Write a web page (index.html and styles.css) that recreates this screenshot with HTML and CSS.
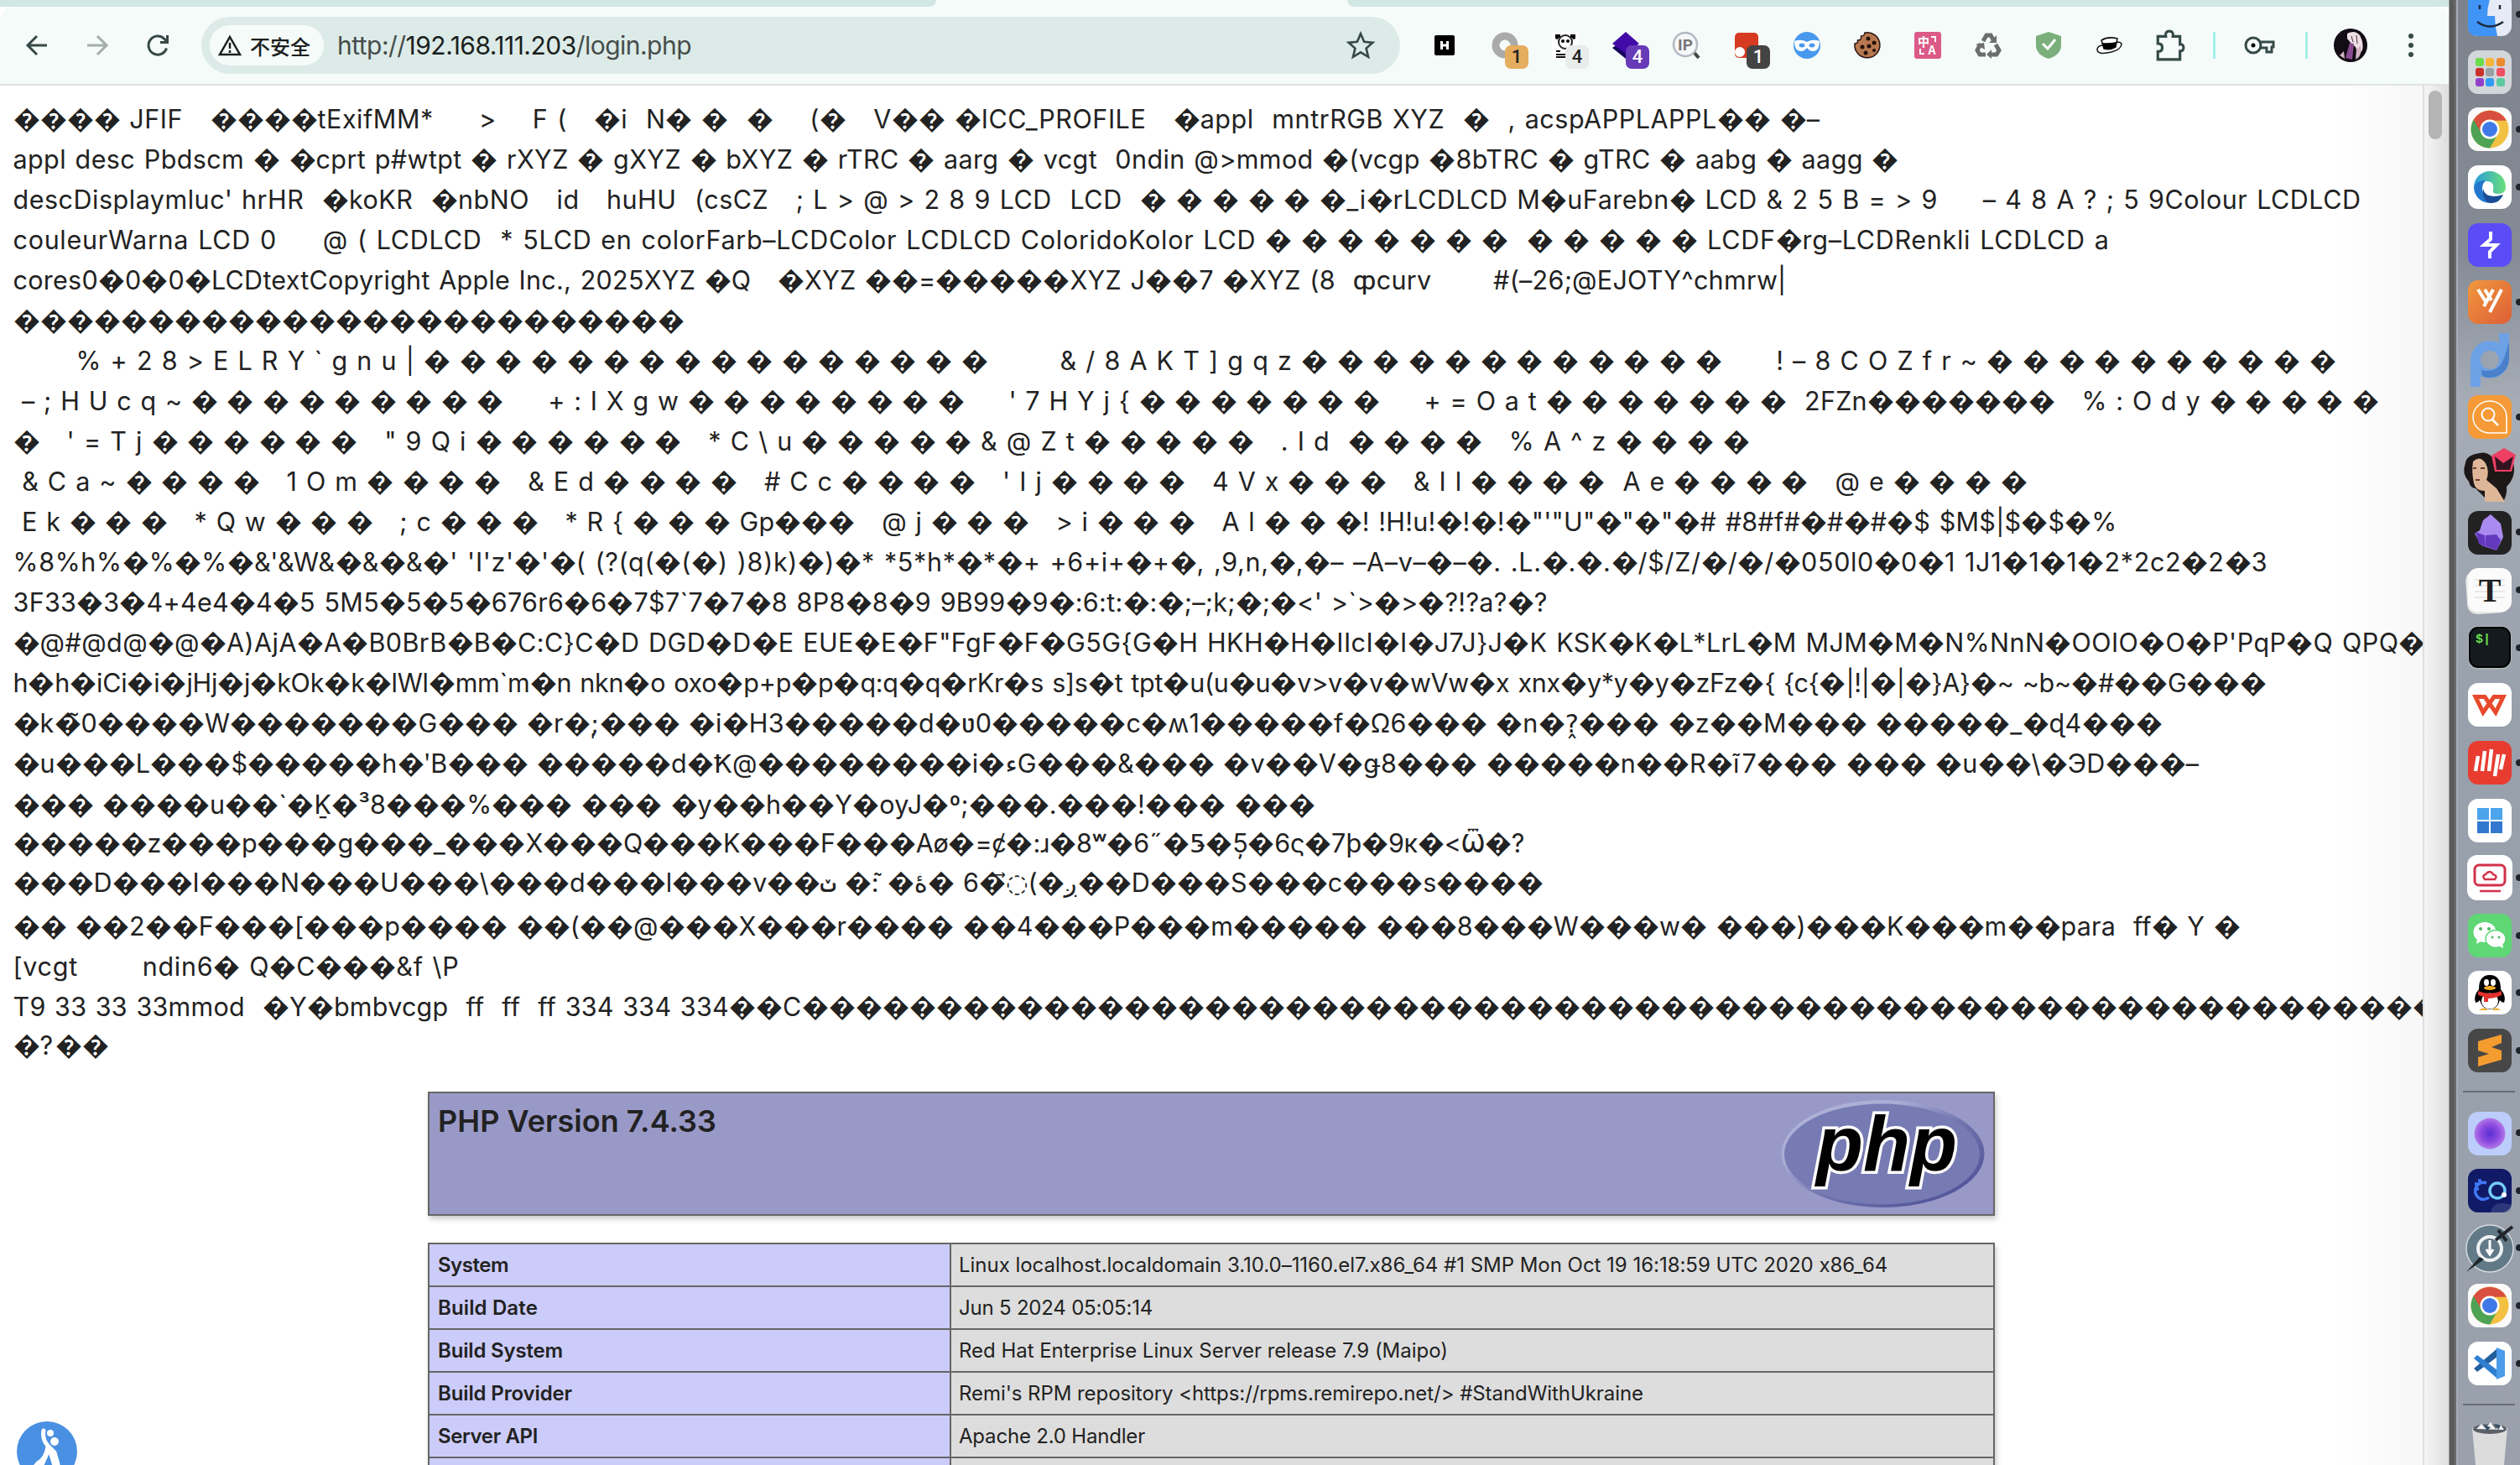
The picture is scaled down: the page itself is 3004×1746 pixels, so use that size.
FILE: index.html
```html
<!DOCTYPE html>
<html lang="zh-CN">
<head>
<meta charset="utf-8">
<title>phpinfo()</title>
<link rel="stylesheet" href="styles.css">
</head>
<body>
<main class="window">
  <div class="tabstrip"><span class="tab-left"></span><span class="tab-active"></span><span class="tab-right"></span></div>
  <header class="toolbar">
    <nav class="nav">
      <svg viewBox="0 0 32 32"><path d="M28 16H6M16 5L5 16l11 11" class="ln"/></svg>
      <svg viewBox="0 0 32 32" class="dim"><path d="M4 16h22M16 5l11 11-11 11" class="ln"/></svg>
      <svg viewBox="0 0 32 32"><path d="M26.500 19.500A11 11 0 1 1 24 8.500L27 11.500M27.500 4v8.500H19" class="ln"/></svg>
    </nav>
    <div class="omnibox">
      <span class="chip">
        <svg viewBox="0 0 28 26"><path d="M14 3L26 24H2Z" class="ln thin"/><path d="M14 10v7M14 19v3" class="ln thin"/></svg>
        <span>不安全</span>
      </span>
      <span class="url fit" data-w="422">http://<b>192.168.111.203</b>/login.php</span>
      <svg class="star" viewBox="0 0 32 32"><path d="M16 3l3.900 9.100 9.600.9-7.300 6.400 2.300 9.600L16 23.900 7.500 29l2.300-9.600L2.500 13l9.600-.9z" class="ln thin"/></svg>
    </div>
    <div class="exts">
      <span class="ext"><svg viewBox="0 0 32 32"><rect x="4" y="4" width="24" height="24" rx="2"/><path d="M12.500 11v10M19.500 11v10M12.500 16h7" stroke="#fff" stroke-width="3"/></svg></span>
      <span class="ext"><svg viewBox="0 0 32 32"><circle cx="16" cy="16" r="11" fill="none" stroke="#aaa" stroke-width="9"/></svg><i class="badge amber">1</i></span>
      <span class="ext"><svg viewBox="0 0 32 32"><rect width="32" height="32" fill="#fff"/><path d="M4 8V3h6v3L6 9zM28 8V3h-6v3l4 3z"/><circle cx="16" cy="12" r="8" fill="#fff" stroke="#222" stroke-width="2"/><circle cx="13" cy="11" r="2"/><circle cx="19" cy="11" r="2"/><path d="M5 27h20M5 23h5M5 30h14" stroke="#111" stroke-width="2"/></svg><i class="badge pale">4</i></span>
      <span class="ext"><svg viewBox="0 0 32 32"><path d="M16 8l16 11-16 13L0 19z" fill="#160060"/><path d="M16 0l16 14-16 12L0 14z" fill="#420ba8"/></svg><i class="badge violet">4</i></span>
      <span class="ext"><svg viewBox="0 0 32 32"><path d="M25 24l6 7" stroke="#444" stroke-width="4"/><circle cx="15" cy="15" r="14" fill="#f6f8fa" stroke="#b4bac2" stroke-width="2.500"/><text x="15" y="22" text-anchor="middle" class="ip">IP</text></svg></span>
      <span class="ext"><svg viewBox="0 0 32 32"><rect x="2" y="1" width="28" height="30" rx="5" fill="#d63a20"/><circle cx="8" cy="24" r="6" fill="#fff"/></svg><i class="badge dark">1</i></span>
      <span class="ext"><svg viewBox="0 0 32 32"><circle cx="16" cy="16" r="16" fill="#4898ee"/><path d="M1 11q8-3 15 1 7-4 15-1 0 12-8 12-4 0-7-4-3 4-7 4-8 0-8-12z" fill="#fff"/><ellipse cx="10" cy="16" rx="3.500" ry="2.500" fill="#4898ee"/><ellipse cx="22" cy="16" rx="3.500" ry="2.500" fill="#4898ee"/></svg></span>
      <span class="ext"><svg viewBox="0 0 32 32"><path d="M13 1a15 15 0 1 1-12 13q4 0 3.500-4 5 0 4-5 4 0 4.500-4z" fill="#b87850" stroke="#2a1410" stroke-width="1.500"/><g fill="#24100c"><circle cx="17" cy="8" r="2.500"/><circle cx="24" cy="13" r="2.500"/><circle cx="10" cy="18" r="2.500"/><circle cx="18" cy="17" r="2.500"/><circle cx="24" cy="22" r="2"/><circle cx="14" cy="25" r="2.500"/></g></svg></span>
      <span class="ext"><svg viewBox="0 0 32 32"><rect width="32" height="32" rx="3" fill="#db5a87"/><text x="11" y="17" text-anchor="middle" class="tr">中</text><text x="21" y="27" text-anchor="middle" class="tr">A</text><path d="M7 20v6h5M20 6h5v6" fill="none" stroke="#fff" stroke-width="2"/></svg></span>
      <span class="ext"><svg viewBox="0 0 32 32"><g fill="none" stroke="#6d6d6d" stroke-width="5"><path d="M10 11l4-7h5l4 7M25 15l4 7-3 5h-7M13 27H6l-3-5 4-8"/></g><path d="M26 4v9h-9zM20 21v11l-6-5zM1 15l10-2 1 8z" fill="#6d6d6d"/></svg></span>
      <span class="ext"><svg viewBox="0 0 32 32"><path d="M16 0l15 5v11q0 11-15 16Q1 27 1 16V5z" fill="#7aaf7c"/><path d="M9 14l6 6 9-11" fill="none" stroke="#fff" stroke-width="3"/></svg></span>
      <span class="ext"><svg viewBox="0 0 32 32"><path d="M2 21q0-4 6-5l17-4q6 0 6 3-1 6-12 9-17 4-17-3z" fill="#fff" stroke="#111" stroke-width="1.500"/><path d="M7 10q8-5 19-2l-2 10q-7 4-14 2z" fill="#fff" stroke="#111" stroke-width="1.500"/><path d="M7.500 13q9 1 17.500-1l-1 6q-7 4-14 2z"/></svg></span>
      <span class="ext"><svg viewBox="0 0 36 36"><path d="M5 8h9q-1-6 4-6t4 6h8v9q4-.5 4 3.500t-4 4V34H5v-9q5 0 5-4.500T5 16z" class="ln"/></svg></span>
    </div>
    <i class="rule"></i>
    <svg class="key" viewBox="0 0 38 32"><circle cx="11" cy="16" r="9" class="ln"/><circle cx="11" cy="16" r="2.500"/><path d="M19 12h16v6h-2v6h-6v-5h-8" class="ln"/></svg>
    <i class="rule"></i>
    <svg class="avatar" viewBox="0 0 40 40"><circle cx="20" cy="20" r="20" fill="#120c14"/><path d="M16 6q9-5 15 2 5 9 3 18l-5 6-3-10-5-4-5-6z" fill="#eddfe3"/><path d="M19 17l5 1-2 19-8-2z" fill="#8a4b92"/><path d="M27 24l5-3q2 7-2 13l-4 3zM12 27l-5 5 6 4z" fill="#d2b4c2"/><path d="M21 9l2 7M27 8l1 10" stroke="#4a3040"/></svg>
    <svg class="more" viewBox="0 0 8 32"><circle cx="4" cy="5" r="3"/><circle cx="4" cy="16" r="3"/><circle cx="4" cy="27" r="3"/></svg>
  </header>

  <div class="page">
    <div class="viewport">
      <section class="dump">
<div class="line fit" data-w="2154">���� JFIF   ����tExifMM*     &gt;    F (   �i  N� �  �    (�   V�� �ICC_PROFILE   �appl  mntrRGB XYZ  �  , acspAPPLAPPL�� �–</div>
<div class="line fit" data-w="2248">appl desc Pbdscm � �cprt p#wtpt � rXYZ � gXYZ � bXYZ � rTRC � aarg � vcgt  0ndin @&gt;mmod �(vcgp �8bTRC � gTRC � aabg � aagg �</div>
<div class="line fit" data-w="2799">descDisplaymluc' hrHR  �koKR  �nbNO   id   huHU  (csCZ   ; L &gt; @ &gt; 2 8 9 LCD  LCD  � � � � � �_i�rLCDLCD M�uFarebn� LCD &amp; 2 5 B = &gt; 9     – 4 8 A ? ; 5 9Colour LCDLCD</div>
<div class="line fit" data-w="2499">couleurWarna LCD 0     @ ( LCDLCD  * 5LCD en colorFarb–LCDColor LCDLCD ColoridoKolor LCD � � � � � � �  � � � � � LCDF�rg–LCDRenkli LCDLCD a</div>
<div class="line fit" data-w="2114">cores0�0�0�LCDtextCopyright Apple Inc., 2025XYZ �Q   �XYZ ��=�����XYZ J��7 �XYZ (8  ȹcurv       #(–26;@EJOTY^chmrw|</div>
<div class="line fit">�������������������������</div>
<div class="line fit" data-w="2769">       % + 2 8 &gt; E L R Y ` g n u | � � � � � � � � � � � � � � � �        &amp; / 8 A K T ] g q z � � � � � � � � � � � �      ! – 8 C O Z f r ~ � � � � � � � � � �</div>
<div class="line fit" data-w="2820"> – ; H U c q ~ � � � � � � � � �     + : I X g w � � � � � � � �     ' 7 H Y j { � � � � � � �     + = O a t � � � � � � �  2FZn�������   % : O d y � � � � �</div>
<div class="line fit" data-w="2070">�   ' = T j � � � � � �   " 9 Q i � � � � � �   * C \ u � � � � � &amp; @ Z t � � � � �   . I d  � � � �   % A ^ z � � � �</div>
<div class="line fit" data-w="2401"> &amp; C a ~ � � � �   1 O m � � � �   &amp; E d � � � �   # C c � � � �   ' I j � � � �   4 V x � � �   &amp; I l � � � �  A e � � � �   @ e � � � �</div>
<div class="line fit" data-w="2508"> E k � � �   * Q w � � �   ; c � � �   * R { � � � Gp���   @ j � � �   &gt; i � � �   A l � � �! !H!u!�!�!�"'"U"�"�"�# #8#f#�#�#�$ $M$|$�$�%</div>
<div class="line fit" data-w="2692">%8%h%�%�%�&amp;'&amp;W&amp;�&amp;�&amp;�' 'I'z'�'�( (?(q(�(�) )8)k)�)�* *5*h*�*�+ +6+i+�+�, ,9,n,�,�– –A–v–�–�. .L.�.�.�/$/Z/�/�/�050l0�0�1 1J1�1�1�2*2c2�2�3</div>
<div class="line fit" data-w="1829">3F33�3�4+4e4�4�5 5M5�5�5�676r6�6�7$7`7�7�8 8P8�8�9 9B99�9�:6:t:�:�;–;k;�;�&lt;' &gt;`&gt;�&gt;�?!?a?�?</div>
<div class="line fit" data-w="2876">�@#@d@�@�A)AjA�A�B0BrB�B�C:C}C�D DGD�D�E EUE�E�F"FgF�F�G5G{G�H HKH�H�IIcI�I�J7J}J�K KSK�K�L*LrL�M MJM�M�N%NnN�OOIO�O�P'PqP�Q QPQ�</div>
<div class="line fit" data-w="2687">h�h�iCi�i�jHj�j�kOk�k�lWl�mm`m�n nkn�o oxo�p+p�p�q:q�q�rKr�s s]s�t tpt�u(u�u�v&gt;v�v�wVw�x xnx�y*y�y�zFz�{ {c{�|!|�|�}A}�~ ~b~�#��G���</div>
<div class="line fit" data-w="2563">�k�̃0����W�������G��� �r�;̩��� �i�H3�����d�ʋ0�����c�ʍ1�����f�Ω6��� �n�?̭��� �z��M��� �����_�ɖ4���</div>
<div class="line fit" data-w="2606">�u���L���$�����h�ʹB��� �����d�Ҟ@��������i�ءG���&amp;��� �v��V�ǥ8��� �����n��R�ĩ7��� ��� �u��\�ЭD���–</div>
<div class="line fit d1" data-w="1552">��� ����u��`�Ḵ�³8���%��� ��� �y��h��Y�oyJ�º;���.���!��� ���</div>
<div class="line fit u2" data-w="1801">�����z���p���g���_���X���Q���K���F���Aø�=ȼ�:ɹ�8ʷ�6˶�5̵�5̦�6ς�7ϸ�9к�&lt;Ѿ�?</div>
<div class="line fit u1" data-w="1844">���D���I���N���U���\���d���l���v��ݖ �:̃ �ۀ� 6�◌⃗(�ږ��D���S���c���s����</div>
<div class="line fit d4" data-w="2655">�� ��2��F���[���p���� ��(��@���X���r���� ��4���P���m����� ���8���W���w� ���)���K���m��para  ff� Y �</div>
<div class="line fit" data-w="532">[vcgt       ndin6� Q�C���&amp;f \P</div>
<div class="line fit" data-w="2892">T9 33 33 33mmod  �Y�bmbvcgp  ff  ff  ff 334 334 334��C�������������������������������������������������������������</div>
<div class="line fit u2" data-w="114">�?��</div>
      </section>

      <section class="info">
        <div class="banner">
          <h1><span class="fit" data-w="332">PHP Version 7.4.33</span></h1>
          <svg viewBox="0 0 241 128">
            <defs><linearGradient id="rim" x1="0" y1="0" x2="1" y2="1"><stop offset="0" stop-color="#b4b7da"/><stop offset=".3" stop-color="#a9acd4"/><stop offset=".55" stop-color="#6f73ad"/><stop offset="1" stop-color="#484893"/></linearGradient></defs>
            <ellipse cx="119.500" cy="64" rx="121" ry="64" fill="url(#rim)"/>
            <ellipse cx="118.500" cy="64.500" rx="116.500" ry="60" fill="#777bb3"/>
            <text x="40" y="84" textLength="168" lengthAdjust="spacingAndGlyphs" class="php">php</text>
          </svg>
        </div>
        <table>
          <tr><th><span class="fit" data-w="84">System</span></th><td><span class="fit" data-w="1110">Linux localhost.localdomain 3.10.0–1160.el7.x86_64 #1 SMP Mon Oct 19 16:18:59 UTC 2020 x86_64</span></td></tr>
          <tr><th><span class="fit" data-w="119">Build Date</span></th><td><span class="fit" data-w="231">Jun 5 2024 05:05:14</span></td></tr>
          <tr><th><span class="fit" data-w="149">Build System</span></th><td><span class="fit" data-w="583">Red Hat Enterprise Linux Server release 7.9 (Maipo)</span></td></tr>
          <tr><th><span class="fit" data-w="160">Build Provider</span></th><td><span class="fit" data-w="816">Remi's RPM repository &lt;https://rpms.remirepo.net/&gt; #StandWithUkraine</span></td></tr>
          <tr><th><span class="fit" data-w="119">Server API</span></th><td><span class="fit" data-w="222">Apache 2.0 Handler</span></td></tr>
          <tr><th></th><td></td></tr>
        </table>
      </section>
      <svg class="float-btn" viewBox="0 0 72 72"><circle cx="36" cy="36" r="36" fill="#4a90e2"/><circle cx="40" cy="14" r="4" fill="#fff"/><circle cx="45" cy="24" r="5" fill="#fff"/><path d="M32 11q-2 10 5 18l8 8 4 14M37 30q-2 14-12 20l-5 6M38 34l-10 22M40 36l6 20" fill="none" stroke="#fff" stroke-width="5" stroke-linecap="round"/></svg>
    </div>
    <aside class="gutter"><i class="thumb"></i></aside>
  </div>
</main>
<div class="edge"></div>

<aside class="dock">
  <span class="app"><svg viewBox="0 0 52 52"><rect width="52" height="52" rx="12" fill="#e6ebf5"/><path d="M12 0h17q-6 14-6 28h9q0 12 3 24H12Q0 52 0 40V12Q0 0 12 0z" fill="#3f94f5"/><path d="M14 15v5M38 15v5M11 35q15 11 31 0" fill="none" stroke="#1c2a3c" stroke-width="2.500"/></svg></span>
  <span class="app nodot"><svg viewBox="0 0 52 52"><rect width="52" height="52" rx="12" fill="#d3d6da"/><g><rect x="9" y="9" width="10" height="10" rx="3" fill="#6bdc4c"/><rect x="21" y="9" width="10" height="10" rx="3" fill="#f5b63a"/><rect x="34" y="9" width="10" height="10" rx="3" fill="#ec8a2e"/><rect x="9" y="21" width="10" height="10" rx="3" fill="#c9302a"/><rect x="21" y="21" width="10" height="10" rx="3" fill="#98a0a6"/><rect x="34" y="21" width="10" height="10" rx="3" fill="#f04e62"/><rect x="9" y="33" width="10" height="10" rx="3" fill="#9140c8"/><rect x="21" y="33" width="10" height="10" rx="3" fill="#2f9cf5"/><rect x="34" y="33" width="10" height="10" rx="3" fill="#5ccaa0"/></g></svg></span>
  <span class="app"><svg viewBox="0 0 52 52"><g id="chrome"><rect width="52" height="52" rx="12" fill="#fafafa"/><circle cx="26" cy="26" r="22.500" fill="#f3c142"/><path d="M26 26L6.500 14.800A22.500 22.500 0 0 0 26 48.500L36 31z" fill="#4ea355"/><path d="M26 26L6.500 14.800a22.500 22.500 0 0 1 39.400 1H26z" fill="#d94f3f"/><path d="M26 26L16.500 31 6.500 14.800z" fill="#d94f3f"/><circle cx="26" cy="26" r="11.500" fill="#fff"/><circle cx="26" cy="26" r="9" fill="#3f79e8"/></g></svg></span>
  <span class="app"><svg viewBox="0 0 52 52"><defs><linearGradient id="eg" x1="0" x2="1"><stop offset="0" stop-color="#2a9bdc"/><stop offset="1" stop-color="#6be07a"/></linearGradient></defs><rect width="52" height="52" rx="12" fill="#fff"/><path d="M7 26a19 19 0 0 1 38 0q0 8-9 8-8 0-6-5 2-10-8-10Q11 19 7 26z" fill="url(#eg)"/><path d="M7 26q3-8 14-8-6 7-3 14 4 9 21 7-5 6-13 6A19 19 0 0 1 7 26z" fill="#2277cc"/><path d="M18 28q3 13 24 7-4 10-15 10-10-2-9-17z" fill="#1a4d96"/></svg></span>
  <span class="app nodot"><svg viewBox="0 0 52 52"><rect width="52" height="52" rx="12" fill="#5a4df8"/><path d="M27 10v9l-8 7h15l-8 8v8" fill="none" stroke="#fff" stroke-width="4"/></svg></span>
  <span class="app"><svg viewBox="0 0 52 52"><defs><linearGradient id="or" x1="0" y1="0" x2="1" y2="1"><stop offset="0" stop-color="#f0983e"/><stop offset="1" stop-color="#de5e36"/></linearGradient></defs><rect width="52" height="52" rx="12" fill="url(#or)"/><path d="M12 11l10 16M20 11l8 13M30 11L19 31M40 11L26 38" stroke="#fff" stroke-width="4"/></svg></span>
  <span class="app nodot"><svg class="tall" viewBox="0 0 52 64"><path d="M3 64V32A23 23 0 0 1 37 12V0h12v32A23 23 0 0 1 15 51v13z" fill="#6da1e5"/><path d="M17 51a23 23 0 0 0 32-19V10q-6 24-12 30-8 7-21 4z" fill="#4a7fca"/><circle cx="26" cy="32" r="11" fill="#9aa3b0"/></svg></span>
  <span class="app"><svg viewBox="0 0 52 52"><rect width="52" height="52" rx="12" fill="#f59a36"/><path d="M46 26v19H26a20 19 0 1 1 20-19z" fill="none" stroke="#fff" stroke-width="1.500"/><circle cx="24" cy="23" r="7.500" fill="none" stroke="#fff" stroke-width="2"/><path d="M29 29l7 7" stroke="#fff" stroke-width="2.500"/></svg></span>
  <span class="app nodot"><svg class="wide" viewBox="0 0 64 64"><path d="M20 6Q4 8 3 18q-5 12 4 22 2 8 8 8l14 14h20q4-8 3-16 12-12 8-28-8-10-26-8-6-6-14-4z" fill="#1d1718"/><path d="M12 16q8-8 15 2 5 10 1 20l12 10 10 16H26l0-13q-11 0-13-9-3-14-1-26z" fill="#ddb797"/><path d="M12 24h4M21 24h5M15 38h5" stroke="#6b3a30" stroke-width="2"/><path d="M49 0l14 8-5 20H38l-4-19z" fill="#ef3f63"/><path d="M38 10l10 8 12-8-4 16H40z" fill="#33131f"/></svg></span>
  <span class="app"><svg viewBox="0 0 52 52"><rect width="52" height="52" rx="12" fill="#222"/><path d="M27 4l12 11 3 16-8 16-18-6-8-14 6-4 4-12z" fill="#a98af0"/><path d="M9 25l11 4 1 14-8-4zM21 29l13-1 5 7-5 12-13-5z" fill="#6438bd"/></svg></span>
  <span class="app"><svg viewBox="0 0 52 52"><rect x="-2" y="2" width="51" height="52" rx="12" fill="#e8e8e8" transform="rotate(-4 26 26)"/><rect width="52" height="52" rx="12" fill="#fbfbfb"/><path d="M8 14h36M8 21h36M8 28h36M8 35h36" stroke="#e2e2e2" stroke-width="1.500"/><text x="26" y="40" text-anchor="middle" class="typ">T</text></svg></span>
  <span class="app"><svg viewBox="0 0 52 52"><rect width="52" height="52" rx="12" fill="#a8b4b8"/><rect x="2" y="2" width="48" height="47" rx="10" fill="#131b1e" stroke="#000" stroke-width="2"/><text x="9" y="20" class="term">$|</text></svg></span>
  <span class="app nodot"><svg viewBox="0 0 52 52"><rect width="52" height="52" rx="12" fill="#fff"/><path d="M9 16.500h11l13 18.500 9-18.500H31L18 35z" fill="none" stroke="#e84a2c" stroke-width="5"/></svg></span>
  <span class="app"><svg viewBox="0 0 52 52"><rect width="52" height="52" rx="12" fill="#e83c31"/><path d="M12 18L9 36M20 12l-3 24M28 10l-3 26M36 16l-4 26M43 16l-4 18" stroke="#fff" stroke-width="4.500"/></svg></span>
  <span class="app nodot"><svg viewBox="0 0 52 52"><rect width="52" height="52" rx="12" fill="#fff"/><path d="M11 11h14v14H11zM27 11h14v14H27z" fill="#4ca5ec"/><path d="M11 27h14v14H11zM27 27h14v14H27z" fill="#3378d0"/></svg></span>
  <span class="app"><svg viewBox="0 0 52 52"><rect x="-1" y="-1" width="54" height="54" rx="12" fill="#fff"/><rect x="8" y="11" width="36" height="24" rx="5" fill="none" stroke="#d2314a" stroke-width="3"/><path d="M20 28q-4-4 1-6 5-6 9 0 6 2 2 6zM14 42h25" fill="none" stroke="#d2314a" stroke-width="2.500"/></svg></span>
  <span class="app"><svg viewBox="0 0 52 52"><rect width="52" height="52" rx="12" fill="#5fd775"/><ellipse cx="20" cy="22" rx="13.500" ry="12" fill="#fff"/><path d="M11 30l-1 6 7-4z" fill="#fff"/><ellipse cx="33" cy="30" rx="12" ry="10.500" fill="#fff" stroke="#5fd775" stroke-width="1.500"/><path d="M41 35l1 6-6-3z" fill="#fff"/><g fill="#4fb863"><circle cx="15" cy="18" r="2"/><circle cx="25" cy="18" r="2"/><circle cx="29" cy="28" r="1.500"/><circle cx="37" cy="28" r="1.500"/></g></svg></span>
  <span class="app"><svg viewBox="0 0 52 52"><rect width="52" height="52" rx="12" fill="#fff"/><path d="M26 5q13 0 13 17 7 8 4 16-3 0-5-3-3 11-12 11t-12-11q-2 3-5 3-3-8 4-16Q13 5 26 5z"/><ellipse cx="26" cy="36" rx="10" ry="9.500" fill="#fff"/><ellipse cx="22" cy="14" rx="3" ry="4" fill="#fff"/><ellipse cx="30" cy="14" rx="3" ry="4" fill="#fff"/><ellipse cx="26" cy="20.500" rx="7" ry="2.500" fill="#f5ac28"/><path d="M12 24q14 6 28 0v5q-8 4-16 4v4h-5v-6l-7-2z" fill="#e2312d"/><path d="M13 47q6-5 11 0zM28 47q6-5 11 0z" fill="#f5ac28"/></svg></span>
  <span class="app"><svg viewBox="0 0 52 52"><rect width="52" height="52" rx="12" fill="#474747"/><path d="M12 15l28-8v10l-12 5 12 4v11L12 45V34l13-4-13-4z" fill="#f49c30"/></svg></span>
  <i class="sep"></i>
  <span class="app"><svg viewBox="0 0 52 52"><defs><radialGradient id="ball"><stop offset="0" stop-color="#5a2fd0"/><stop offset=".6" stop-color="#8e4be0"/><stop offset="1" stop-color="#b37be8"/></radialGradient></defs><rect width="52" height="52" rx="12" fill="#bccdfc"/><circle cx="26" cy="26" r="18.500" fill="url(#ball)"/></svg></span>
  <span class="app"><svg viewBox="0 0 52 52"><rect width="52" height="52" rx="12" fill="#101a66"/><path d="M27 52q2-11 14-11 7 0 11 3-1 8-10 8z" fill="#4a5590" opacity=".5"/><path d="M22 17a10 10 0 1 0 3 17M8 18h4M9 24h4M12 14h4" fill="none" stroke="#3f78f6" stroke-width="3.500"/><circle cx="35" cy="26" r="9" fill="none" stroke="#74cdfa" stroke-width="3.500"/><circle cx="43" cy="31" r="3" fill="#fff"/></svg></span>
  <span class="app"><svg class="wide" viewBox="0 0 64 64"><circle cx="32" cy="32" r="28" fill="#627987" stroke="#d4dade" stroke-width="1.500"/><circle cx="32" cy="32" r="14" fill="none" stroke="#eef1f3" stroke-width="4"/><path d="M32 22v16M28 33l4 6 4-6" stroke="#fff" stroke-width="3" fill="none"/><path d="M4 60l16-18 5 3z" fill="#20262b"/><path d="M39 22L59 6M42 10l10 13" stroke="#20262b" stroke-width="4"/></svg></span>
  <span class="app"><svg viewBox="0 0 52 52"><use href="#chrome"/></svg></span>
  <span class="app"><svg viewBox="0 0 52 52"><rect width="52" height="52" rx="12" fill="#fff"/><path d="M35 8v10L11 36l-4-4z" fill="#235f9e"/><path d="M35 44V34L11 16l-4 4z" fill="#2f7fd0"/><path d="M34 7l10 4v30l-10 4z" fill="#4a9cea"/></svg></span>
  <i class="sep"></i>
  <span class="app nodot"><svg class="tall" viewBox="0 0 52 64"><path d="M5 10Q26 0 47 10l-5 54H10z" fill="#dcdcdc"/><ellipse cx="26" cy="11" rx="20" ry="6" fill="#5c6068"/><path d="M10 11l6-6 5 5 6-7 6 8 6-5 4 6z" fill="#f2f2f2"/><path d="M18 6l5 7 4-4zM32 5l4 7 3-5z" fill="#35506a"/></svg></span>
</aside>
<script src="fit.js"></script>
</body>
</html>
```
FILE: styles.css
```css
* { box-sizing: border-box; }
body {
  margin: 0; width: 3004px; height: 1746px; overflow: hidden; display: flex;
  font-family: Inter, "DejaVu Sans", "Noto Sans CJK SC", sans-serif; color: #222; background: #9aa1ac;
}
.window { width: 2919px; height: 1746px; display: flex; flex-direction: column; background: #fff; }
.tabstrip { height: 8px; display: flex; background: #f5fbf9; flex: none; }
.tab-left { width: 1116px; background: #d1e7e3; border-bottom-right-radius: 8px; }
.tab-active { width: 490px; }
.tab-right { flex: 1; background: #d1e7e3; border-bottom-left-radius: 8px; }
.toolbar {
  height: 94px; flex: none; display: flex; align-items: center; background: #f5fbf9;
  border-bottom: 2px solid #dce5e2; border-radius: 16px 16px 0 0; color: #354a47;
}
svg { display: block; overflow: visible; flex: none; }
.ln { fill: none; stroke: currentColor; stroke-width: 3; }
.thin { stroke-width: 2.5; }
.nav { width: 240px; padding-left: 28px; display: flex; gap: 40px; }
.nav svg { width: 32px; height: 32px; }
.dim { color: #a2aeab; }
.omnibox {
  width: 1429px; height: 68px; border-radius: 34px; background: #ddebe8;
  display: flex; align-items: center; padding: 0 30px 0 10px; margin-right: 17px;
}
.chip {
  width: 136px; height: 48px; border-radius: 24px; background: #f5fbf9; color: #1b1f1e;
  display: flex; align-items: center; gap: 10px; padding-left: 10px;
  font: 500 24px "Noto Sans CJK SC", sans-serif; white-space: nowrap;
}
.chip svg { width: 28px; height: 26px; }
.url { margin-left: 16px; font-size: 30px; color: #454d4b; white-space: pre; }
.url b { font-weight: 400; color: #1a1f1e; }
.star { width: 34px; height: 34px; margin-left: auto; }
.exts { display: flex; }
.ext { width: 72px; height: 68px; display: flex; align-items: center; justify-content: center; position: relative; }
.ext svg { width: 32px; height: 32px; }
.ext:first-child { fill: #000; }
.ext:last-child svg { width: 38px; height: 38px; }
.badge {
  position: absolute; left: 36px; top: 34px; width: 28px; height: 28px; border-radius: 7px;
  font: 500 22px/28px Roboto, sans-serif; text-align: center;
}
.amber { background: #e5ad5f; color: #222; }
.pale { background: #e8edeb; color: #222; }
.violet { background: #673ab7; color: #fff; }
.dark { background: #444; color: #fff; }
.ip { font: bold 19px Roboto, sans-serif; fill: #777; }
.tr { font: bold 14px "Noto Sans CJK SC", sans-serif; fill: #fff; }
.rule { width: 3px; height: 32px; background: #a4f0e6; margin: 0 16px; }
.key { width: 38px; height: 32px; margin: 0 19px 0 18px; }
.avatar { width: 40px; height: 40px; margin: 0 48px 0 15px; }
.more { width: 8px; height: 32px; fill: #354a47; }

.page { flex: 1; display: flex; min-height: 0; }
.viewport { width: 2888px; overflow: hidden; position: relative; padding: 16px 0 0 16px; background: linear-gradient(90deg, #fff 2780px, #f7f7f7); }
.dump { height: 1183px; font-size: 30.5px; }
.line {
  height: 48px; line-height: 48px; width: max-content; margin-left: -0.5px;
  white-space: pre; word-spacing: 1.7px; unicode-bidi: bidi-override;
}
.rep { font-family: "Noto Sans CJK SC", sans-serif; font-size: 32px; line-height: 1px; letter-spacing: 0; word-spacing: 0; }
.d1 { margin-top: 1px; }
.u1 { margin-top: -1px; }
.u2 { margin-top: -2px; }
.d4 { margin-top: 4px; }

.info { width: 1868px; margin: 0 0 0 494px; }
.banner {
  height: 148px; border: 2px solid #666; background: #9999c8; display: flex; justify-content: space-between;
  padding: 8px 10px; box-shadow: 2px 4px 6px #ccc; margin-bottom: 32px;
}
.banner h1 { margin: 0; font-size: 36px; font-weight: 600; line-height: 50px; white-space: pre; }
.banner svg { width: 241px; height: 128px; }
.php { font: italic bold 92px "Liberation Sans", sans-serif; fill: #000; stroke: #fff; stroke-width: 7px; paint-order: stroke; }
table { width: 1868px; border-collapse: collapse; box-shadow: 2px 4px 6px #ccc; table-layout: fixed; }
th, td { height: 51px; border: 2px solid #666; padding: 0 10px; font-size: 24px; line-height: 34px; text-align: left; white-space: pre; }
th { width: 622px; background: #ccccfa; font-weight: 600; }
td { background: #ddd; padding-left: 9px; }
.float-btn { position: absolute; left: 20px; top: 1592px; width: 72px; height: 72px; }

.gutter { width: 31px; border-left: 2px solid #dedede; background: linear-gradient(90deg, #f5f5f5, #dedede); padding: 6px 0 0 5px; }
.thumb { display: block; width: 16px; height: 58px; border-radius: 8px; background: #b4b4b4; }
.edge { width: 11px; background: linear-gradient(90deg, #999 0 1px, #5b5b5b 1px 5px, #707070 9px, #a6adb6 9px); }
.dock {
  width: 74px; height: 1746px; padding-left: 6px; display: flex; flex-direction: column; overflow: hidden;
  background: linear-gradient(#7d838c, #858b94 300px, #a6adb6 480px, #98a0ac 850px, #9aa1ac);
}
.app { flex: none; height: 68.6px; width: 68px; padding-left: 6px; display: flex; align-items: center; position: relative; }
.app:first-child { margin-top: -17px; }
.app svg { width: 52px; height: 52px; }
.app svg.tall { height: 64px; }
.app svg.wide { width: 64px; height: 64px; margin-left: -6px; }
.app::after { content: ""; position: absolute; right: -3px; top: 30px; width: 8px; height: 8px; border-radius: 4px; background: #1f242a; }
.app.nodot::after { display: none; }
.sep { flex: none; height: 2px; width: 62px; margin: 14px 0; background: #666d77; }
.typ { font: bold 40px "Liberation Serif", serif; fill: #222; }
.term { font: bold 15px "Liberation Mono", monospace; fill: #6ae04a; }
```
FILE: fit.js
```js
// Wraps each run of replacement characters so it keeps a full-width advance,
// then spreads the letters of a run of text over its set width.
document.querySelectorAll('.fit').forEach(function (el) {
  if (el.classList.contains('line')) {
    el.innerHTML = el.innerHTML.replace(/\uFFFD[\uFFFD\u0303]*/g, '<span class="rep">$&</span>');
  }
  var target = Number(el.dataset.w);
  if (!target) return;
  var count = el.textContent.replace(/\uFFFD/g, '').length;
  var width = el.getBoundingClientRect().width;
  el.style.letterSpacing = (target - width) / count + 'px';
});
```
